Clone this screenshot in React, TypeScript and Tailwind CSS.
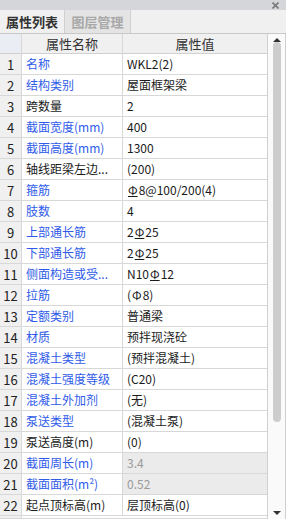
import React from "react";

type Row = { name: string; value: React.ReactNode; blue: boolean; disabled?: boolean };

const G = () => (
  <span className="inline-block px-[1px]" style={{ textDecoration: "underline", textUnderlineOffset: "1px" }}>
    Φ
  </span>
);
const P = () => <span className="inline-block px-[1px]">Φ</span>;

const rows: Row[] = [
  { name: "名称", value: "WKL2(2)", blue: true },
  { name: "结构类别", value: "屋面框架梁", blue: true },
  { name: "跨数量", value: "2", blue: false },
  { name: "截面宽度(mm)", value: "400", blue: true },
  { name: "截面高度(mm)", value: "1300", blue: true },
  { name: "轴线距梁左边...", value: "(200)", blue: false },
  { name: "箍筋", value: <><G />8@100/200(4)</>, blue: true },
  { name: "肢数", value: "4", blue: true },
  { name: "上部通长筋", value: <>2<G />25</>, blue: true },
  { name: "下部通长筋", value: <>2<G />25</>, blue: true },
  { name: "侧面构造或受...", value: <>N10<G />12</>, blue: true },
  { name: "拉筋", value: <>(<P />8)</>, blue: true },
  { name: "定额类别", value: "普通梁", blue: true },
  { name: "材质", value: "预拌现浇砼", blue: true },
  { name: "混凝土类型", value: "(预拌混凝土)", blue: true },
  { name: "混凝土强度等级", value: "(C20)", blue: true },
  { name: "混凝土外加剂", value: "(无)", blue: true },
  { name: "泵送类型", value: "(混凝土泵)", blue: true },
  { name: "泵送高度(m)", value: "(0)", blue: false },
  { name: "截面周长(m)", value: "3.4", blue: true, disabled: true },
  { name: "截面面积(m²)", value: "0.52", blue: true, disabled: true },
  { name: "起点顶标高(m)", value: "层顶标高(0)", blue: false },
];

export default function App() {
  return (
    <div
      className="w-[286px] h-[519px] overflow-hidden bg-[#f0f0f0] flex flex-col text-[12px] text-[#1a1a1a]"
      style={{ fontFamily: '"Noto Sans CJK SC", "Noto Sans", sans-serif' }}
    >
      {/* top bar */}
      <div className="h-[10px] shrink-0 bg-[#d5d6da] flex items-center justify-end pr-[7px]">
        <svg width="7" height="7" viewBox="0 0 7 7">
          <path d="M0.5 0.5 L6.5 6.5 M6.5 0.5 L0.5 6.5" stroke="#7a7a7a" strokeWidth="1.6" />
        </svg>
      </div>
      {/* tabs */}
      <div className="h-[24px] shrink-0 flex border-b border-[#c8c8c8] bg-[#f0f0f0]">
        <div className="w-[65px] flex items-center justify-center border-r border-[#d0d0d0] text-[13px] font-bold text-[#333] leading-none">
          属性列表
        </div>
        <div className="w-[66px] flex items-center justify-center border-r border-[#d0d0d0] bg-[#e4e4e4] text-[13px] font-bold text-[#a8a8a8] leading-none">
          图层管理
        </div>
      </div>
      {/* table + scrollbar */}
      <div className="flex flex-1 min-h-0">
        <div className="w-[268px] shrink-0 flex flex-col border-r border-[#d0d0d0] bg-white">
          {/* header */}
          <div className="h-[20px] shrink-0 flex bg-[#f0f0f0] border-b border-[#d0d0d0] text-[#333] text-[13px]">
            <div className="w-[22px] border-r border-[#d8d8d8] bg-[#eaeef4]" />
            <div className="w-[101px] border-r border-[#d8d8d8] flex items-center justify-center leading-none">属性名称</div>
            <div className="flex-1 flex items-center justify-center leading-none">属性值</div>
          </div>
          {rows.map((r, i) => (
            <div key={i} className="h-[21px] shrink-0 flex border-b border-[#d8d8d8] bg-white">
              <div className="w-[22px] shrink-0 bg-[#f0f0f0] border-r border-[#d8d8d8] flex items-center justify-center text-[13px] text-[#222] leading-none">
                {i + 1}
              </div>
              <div
                className={`w-[101px] shrink-0 border-r border-[#d8d8d8] flex items-center pl-[4px] whitespace-nowrap overflow-hidden leading-none ${
                  r.blue ? "text-[#2f5be8]" : "text-[#1a1a1a]"
                }`}
              >
                {r.name}
              </div>
              <div
                className={`flex-1 flex items-center pl-[4px] whitespace-nowrap overflow-hidden leading-none ${
                  r.disabled ? "bg-[#ebebeb] text-[#9a9a9a]" : "text-[#1a1a1a]"
                }`}
              >
                {r.value}
              </div>
            </div>
          ))}
          <div className="h-[3px] shrink-0 flex border-b border-[#d8d8d8]">
            <div className="w-[22px] bg-[#f0f0f0] border-r border-[#d8d8d8]" />
          </div>
        </div>
        {/* scrollbar */}
        <div className="w-[18px] shrink-0 bg-[#fafafa] flex flex-col items-center border-r border-[#d0d0d0]">
          <div className="h-[5px] mt-[3px] flex items-center justify-center">
            <div className="w-0 h-0 border-l-[4px] border-r-[4px] border-b-[4px] border-l-transparent border-r-transparent border-b-[#333]" />
          </div>
          <div className="w-[8px] h-[380px] rounded-[4px] bg-[#cdcdcd]" />
          <div className="flex-1" />
          <div className="h-[5px] mb-[4px] flex items-center justify-center">
            <div className="w-0 h-0 border-l-[4px] border-r-[4px] border-t-[4px] border-l-transparent border-r-transparent border-t-[#333]" />
          </div>
        </div>
      </div>
    </div>
  );
}
